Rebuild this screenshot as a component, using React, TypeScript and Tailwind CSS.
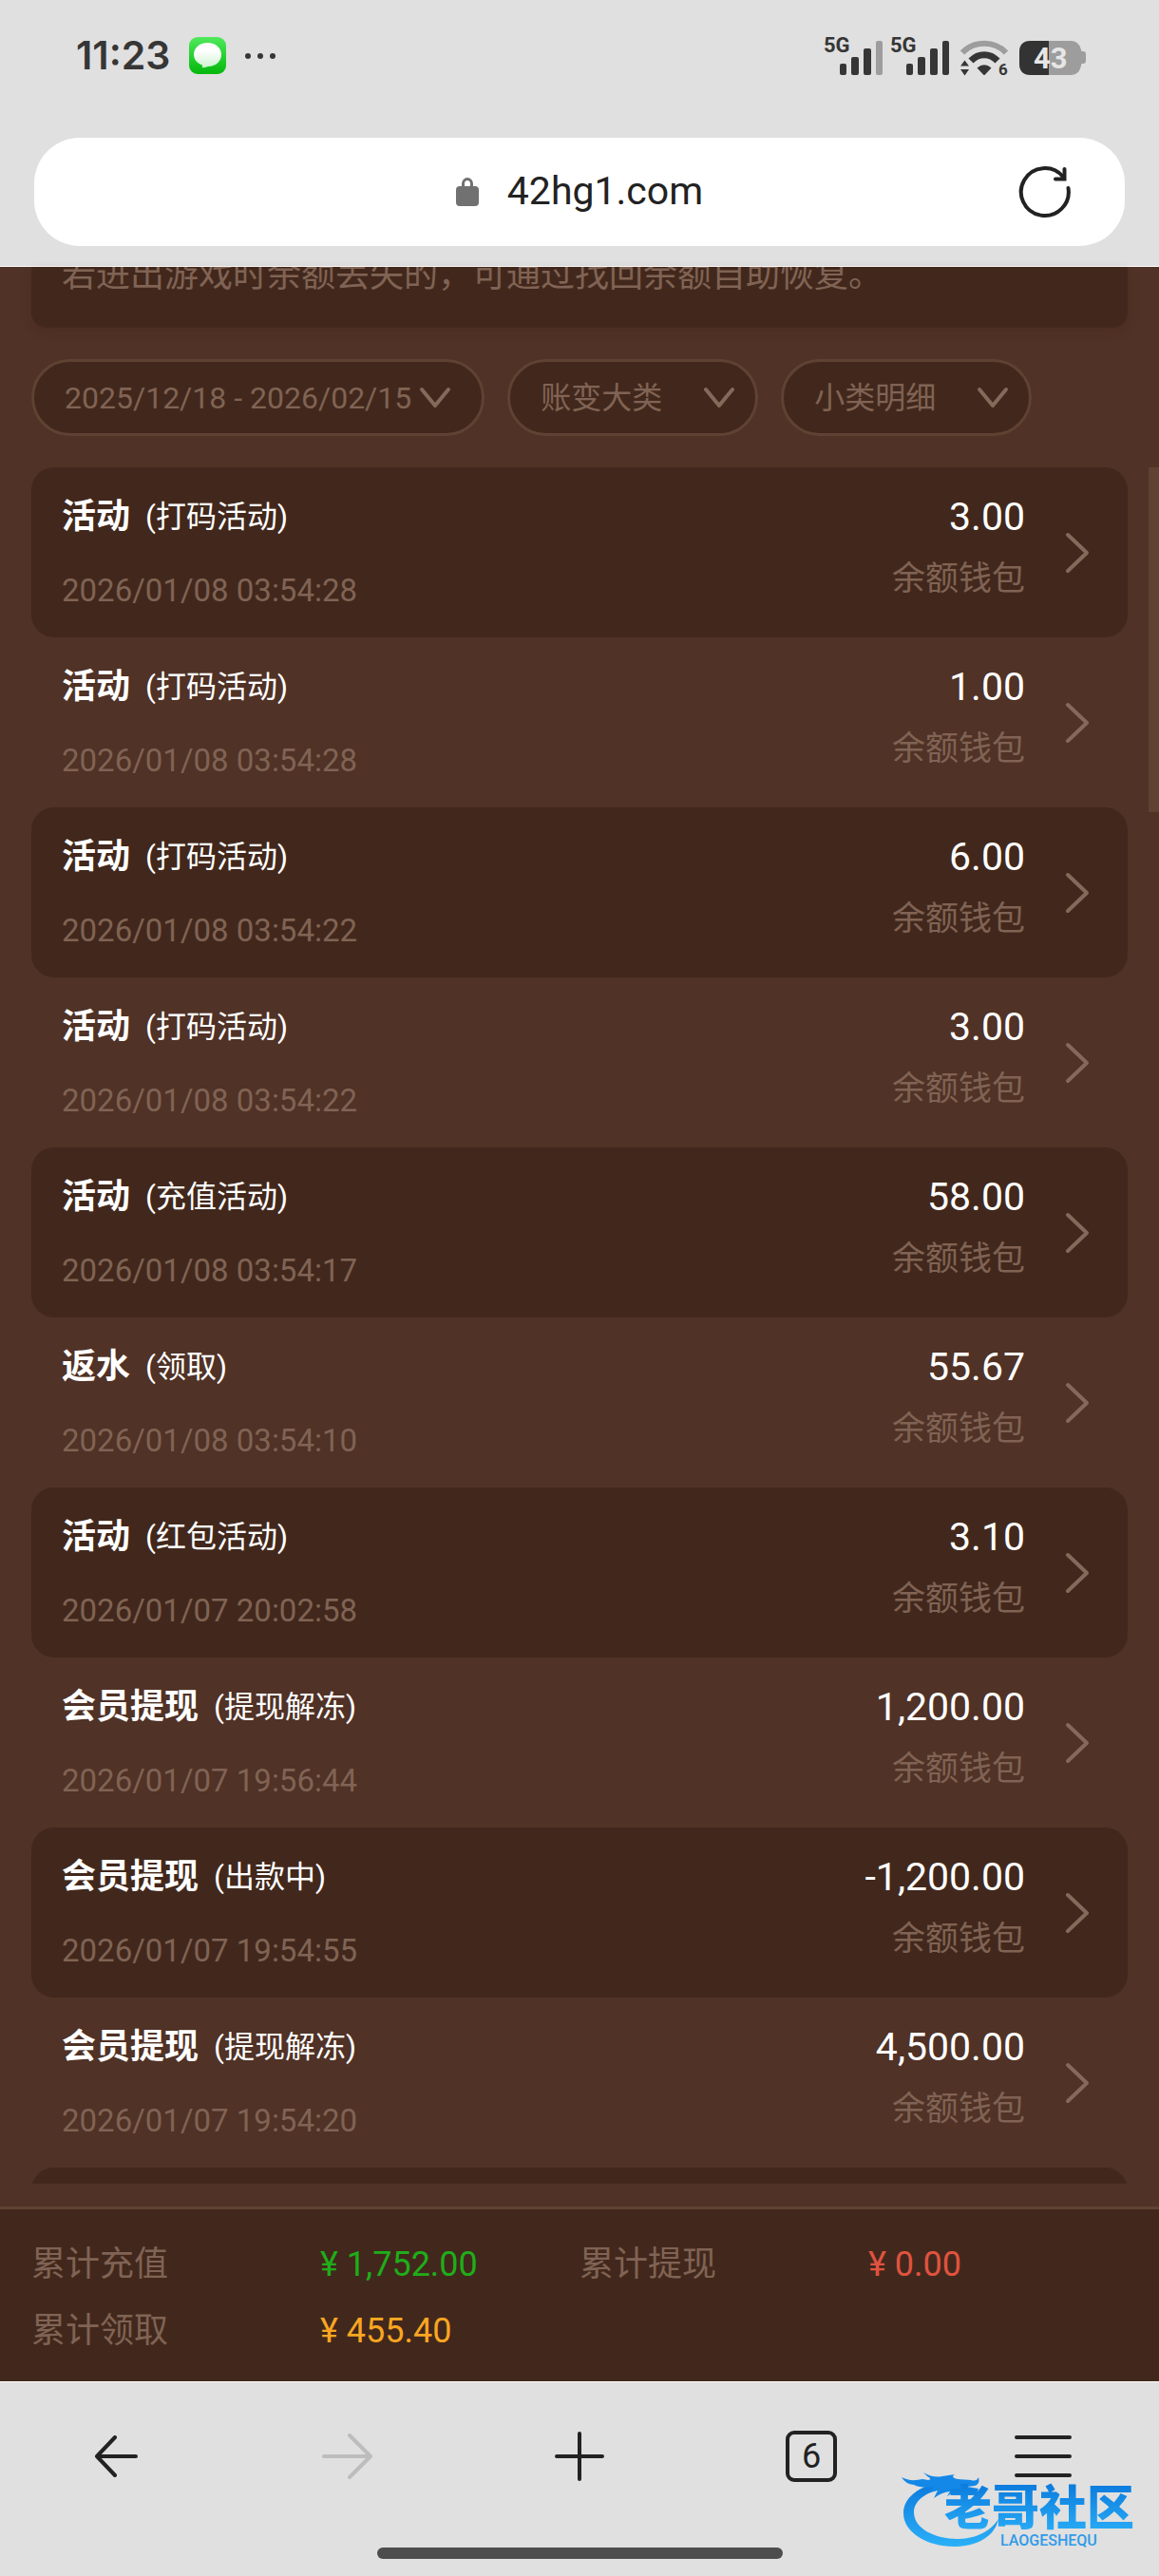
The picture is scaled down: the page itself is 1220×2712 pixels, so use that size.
import { clsx } from "clsx";

interface BillRecord {
    type: string;
    detail: string;
    time: string;
    amount: string;
}

const records: BillRecord[] = [
    { type: "活动", detail: "打码活动", time: "2026/01/08 03:54:28", amount: "3.00" },
    { type: "活动", detail: "打码活动", time: "2026/01/08 03:54:28", amount: "1.00" },
    { type: "活动", detail: "打码活动", time: "2026/01/08 03:54:22", amount: "6.00" },
    { type: "活动", detail: "打码活动", time: "2026/01/08 03:54:22", amount: "3.00" },
    { type: "活动", detail: "充值活动", time: "2026/01/08 03:54:17", amount: "58.00" },
    { type: "返水", detail: "领取", time: "2026/01/08 03:54:10", amount: "55.67" },
    { type: "活动", detail: "红包活动", time: "2026/01/07 20:02:58", amount: "3.10" },
    { type: "会员提现", detail: "提现解冻", time: "2026/01/07 19:56:44", amount: "1,200.00" },
    { type: "会员提现", detail: "出款中", time: "2026/01/07 19:54:55", amount: "-1,200.00" },
    { type: "会员提现", detail: "提现解冻", time: "2026/01/07 19:54:20", amount: "4,500.00" },
];

const totals = [
    { label: "累计充值", value: "1,752.00", color: "text-[#1fad1a]" },
    { label: "累计提现", value: "0.00", color: "text-[#e0533f]" },
    { label: "累计领取", value: "455.40", color: "text-[#f9a622]" },
];

function SignalIcon({ full = false }: { full?: boolean }) {
    return (
        <svg viewBox="-1 -4 66 52" className="h-[52px] w-[66px]" fill="#363636">
            <text x="0" y="18" fontSize="22" fontWeight="700">
                5G
            </text>
            <rect x="17" y="30" width="7" height="12" rx="2" />
            <rect x="29" y="23" width="8" height="19" rx="2" />
            <rect x="42" y="14" width="8" height="28" rx="2" />
            <rect
                x="55"
                y="6"
                width="7"
                height="36"
                rx="2"
                fill={full ? "#363636" : "#9d9d9d"}
            />
        </svg>
    );
}

function WifiIcon() {
    return (
        <svg viewBox="0 -4 54 52" className="h-[52px] w-[54px]" fill="#363636">
            <path
                d="M3 18.5C15 5.500 37 5.500 49 18.5"
                fill="none"
                stroke="#9d9d9d"
                strokeWidth="6"
            />
            <path
                d="M12 27C20 18.500 32 18.500 40 27"
                fill="none"
                stroke="#363636"
                strokeWidth="7"
            />
            <path d="M18.5 34.5Q26 28 33.5 34.5L27 41.5Q26 42.500 25 41.5Z" />
            <path d="M1 32.500L5.500 26.500L10 32.500ZM1 36L5.500 42.500L10 36Z" />
            <text x="41" y="42" fontSize="17" fontWeight="700">
                6
            </text>
        </svg>
    );
}

function BatteryIcon() {
    return (
        <svg viewBox="0 0 70 44" className="h-11 w-[70px]">
            <path
                d="M12 6H54Q62 6 64.500 14L65.500 17H67Q70 17 70 20V27Q70 30 67 30H65.500L64.500 34Q62 42 54 42H12Q0 42 0 30V18Q0 6 12 6Z"
                fill="#9d9d9d"
            />
            <path d="M12 6H31V42H12Q0 42 0 30V18Q0 6 12 6Z" fill="#333333" />
            <text x="15" y="35" fontSize="31" fontWeight="700" fill="#e6e6e6">
                43
            </text>
        </svg>
    );
}

function MessageIcon() {
    return (
        <svg viewBox="0 0 39 39" className="size-[39px]">
            <defs>
                <linearGradient id="msg-bg" x1="0" y1="0" x2="0" y2="1">
                    <stop offset="0" stopColor="#4fe95c" />
                    <stop offset="1" stopColor="#03b80b" />
                </linearGradient>
                <linearGradient id="msg-bubble" x1="0" y1="0" x2="0" y2="1">
                    <stop offset="0.3" stopColor="#ffffff" />
                    <stop offset="1" stopColor="#cdf3cf" />
                </linearGradient>
            </defs>
            <rect width="39" height="39" rx="9" fill="url(#msg-bg)" />
            <path
                d="M19.500 6C28 6 34 11.500 34 18.500C34 25.500 28 31 20 31Q17 32.500 13.500 32Q14.500 31 14 29.500C8.500 27.500 5 23.500 5 18.500C5 11.500 11 6 19.500 6Z"
                fill="url(#msg-bubble)"
            />
        </svg>
    );
}

function ChevronDown() {
    return (
        <svg
            viewBox="0 0 34 24"
            className="pointer-events-none h-6 w-[34px] shrink-0"
            fill="none"
            stroke="#85695b"
            strokeWidth="4"
            strokeLinecap="round"
            strokeLinejoin="round"
        >
            <path d="M3 3L17 20L31 3" />
        </svg>
    );
}

function FilterSelect({ label }: { label: string }) {
    return (
        <div className="relative">
            <select
                aria-label={label}
                className="h-[81px] w-[264px] appearance-none rounded-full border-3 border-[#5f4232] bg-[#42281c] pl-8 text-[32px] text-[#806354]"
            >
                <option>{label}</option>
            </select>
            <div className="pointer-events-none absolute inset-y-0 right-6 flex items-center">
                <ChevronDown />
            </div>
        </div>
    );
}

function RecordRow({ record, dark }: { record: BillRecord; dark: boolean }) {
    return (
        <li>
            <button
                type="button"
                className={clsx(
                    "flex h-[179px] w-full items-center rounded-3xl pr-10 pl-8 text-left",
                    dark && "bg-[#42281c]"
                )}
            >
                <div className="flex flex-1 flex-col gap-[34px] self-start pt-[30px]">
                    <div className="flex items-center gap-4 leading-[44px] text-white">
                        <span className="text-[36px] font-bold">
                            {record.type}
                        </span>
                        <span className="text-[32px]">({record.detail})</span>
                    </div>
                    <time className="text-[33px] leading-[44px] text-[#806354]">
                        {record.time}
                    </time>
                </div>
                <div className="mr-[42px] flex flex-col gap-[22px] self-start pt-[30px] text-right leading-[44px]">
                    <span className="text-[41px] text-white">
                        {record.amount}
                    </span>
                    <span className="text-[35px] text-[#806354]">余额钱包</span>
                </div>
                <svg
                    viewBox="0 0 26 44"
                    className="h-11 w-[26px]"
                    fill="none"
                    stroke="#85695b"
                    strokeWidth="4"
                    strokeLinecap="round"
                    strokeLinejoin="round"
                >
                    <path d="M3 3L23 22L3 41" />
                </svg>
            </button>
        </li>
    );
}

function CommunityLogo() {
    return (
        <svg
            viewBox="0 0 260 92"
            className="pointer-events-none absolute right-3 bottom-6 h-[92px] w-[260px]"
        >
            <defs>
                <linearGradient id="logo-blue" x1="0" y1="0" x2="0" y2="1">
                    <stop offset="0" stopColor="#0a78dc" />
                    <stop offset="1" stopColor="#2bb0f8" />
                </linearGradient>
            </defs>
            {/* Dragon body */}
            <path
                d="M46 16C18 21 3 34 3 50C3 70 28 85 56 85C80 85 99 75 103 56C94 70 78 77 60 77C36 77 14 66 14 49C14 36 28 26 50 24Z"
                fill="url(#logo-blue)"
            />
            {/* Head, horns and whiskers */}
            <path
                d="M1 12Q10 17 23 14L29 15Q34 14 28 11L24 7Q34 13 44 11L57 9Q52 12 60 14L74 15Q80 17 82 12Q84 19 78 21L70 22L82 24Q81 30 73 29L62 27Q54 28 49 32L52 27Q43 28 35 34L39 26L30 27L36 22Q22 24 14 20Q5 19 1 12Z"
                fill="#1388e8"
            />
            <text
                x="46"
                y="62"
                fontSize="50"
                fontWeight="900"
                fill="url(#logo-blue)"
            >
                老哥社区
            </text>
            <text x="105" y="84" fontSize="16" fontWeight="500" fill="#2f9bea">
                LAOGESHEQU
            </text>
        </svg>
    );
}

export default function App() {
    return (
        <div className="relative flex h-screen flex-col overflow-hidden bg-[#503226] font-[Roboto,'Noto_Sans_CJK_SC',sans-serif]">
            {/* Status bar and address bar */}
            <header className="border-b border-white bg-[#e0e0e0] pb-[21px]">
                <div className="flex h-[117px] items-center justify-between pr-[77px] pl-20">
                    <div className="flex items-center gap-5">
                        <span className="font-[Inter,sans-serif] text-[41px] leading-none font-semibold text-[#363636]">
                            11:23
                        </span>
                        <MessageIcon />
                        <div className="flex gap-[7px]">
                            <span className="size-1.5 rounded-full bg-[#363636]" />
                            <span className="size-1.5 rounded-full bg-[#363636]" />
                            <span className="size-1.5 rounded-full bg-[#363636]" />
                        </div>
                    </div>
                    <div className="flex items-center">
                        <SignalIcon />
                        <div className="ml-1">
                            <SignalIcon full />
                        </div>
                        <div className="ml-2">
                            <WifiIcon />
                        </div>
                        <div className="ml-[9px]">
                            <BatteryIcon />
                        </div>
                    </div>
                </div>
                <div className="mx-9 mt-7 grid h-[114px] grid-cols-[1fr_auto_1fr] items-center rounded-[48px] bg-white">
                    <span />
                    <div className="flex items-center gap-[30px]">
                        <svg viewBox="0 0 24 30" className="h-[30px] w-6">
                            <rect y="9" width="24" height="21" rx="4" fill="#717171" />
                            <path
                                d="M7.500 10V6.500A4.500 5 0 0 1 16.500 6.500V10"
                                fill="none"
                                stroke="#717171"
                                strokeWidth="3"
                            />
                        </svg>
                        <input
                            aria-label="网址"
                            defaultValue="42hg1.com"
                            className="field-sizing-content bg-transparent text-[41px] text-[#222222] outline-none"
                        />
                    </div>
                    <button
                        type="button"
                        aria-label="刷新"
                        className="mr-14 justify-self-end"
                    >
                        <svg
                            viewBox="0 0 56 56"
                            className="size-14"
                            fill="none"
                            stroke="#222222"
                            strokeWidth="4"
                            strokeLinecap="round"
                        >
                            <path d="M52.500 24A25 25 0 1 1 47 12" />
                            <path d="M48.500 4V14.500H39" />
                        </svg>
                    </button>
                </div>
            </header>

            {/* Notice, scrolled partly under the header */}
            <div className="mx-[33px] flex h-16 shrink-0 flex-col justify-end overflow-hidden rounded-b-2xl bg-[#42281c] px-8 pb-7 shadow-[0_4px_12px_rgba(60,20,20,0.15)]">
                <p className="text-[36px] leading-[54px] text-[#806354]">
                    若进出游戏时余额丢失的，可通过找回余额自助恢复。
                </p>
            </div>

            {/* Filters */}
            <div className="mx-[33px] my-[33px] flex gap-6">
                <button
                    type="button"
                    className="flex h-[81px] items-center gap-2 rounded-full border-3 border-[#5f4232] bg-[#42281c] px-8 text-[32px] whitespace-nowrap text-[#806354]"
                >
                    2025/12/18 - 2026/02/15
                    <ChevronDown />
                </button>
                <FilterSelect label="账变大类" />
                <FilterSelect label="小类明细" />
            </div>

            {/* Records */}
            <main className="relative mb-6 min-h-0 flex-1 overflow-hidden px-[33px]">
                <ul>
                    {records.map((record, index) => (
                        <RecordRow
                            key={index}
                            record={record}
                            dark={index % 2 === 0}
                        />
                    ))}
                    <li className="h-[179px] rounded-3xl bg-[#42281c]" />
                </ul>
                <div className="absolute top-0 right-0 h-[363px] w-[11px] bg-[#5f4232]" />
            </main>

            {/* Totals */}
            <dl className="grid grid-cols-2 gap-y-5 border-t-3 border-[#5f4232] bg-[#42281c] px-[33px] pt-[33px] pb-7 text-[36px] leading-[50px]">
                {totals.map((total) => (
                    <div key={total.label} className="flex">
                        <dt className="w-[304px] text-[#806354]">
                            {total.label}
                        </dt>
                        <dd className={total.color}>¥ {total.value}</dd>
                    </div>
                ))}
            </dl>

            {/* Browser toolbar */}
            <footer className="border-t border-white bg-[#e0e0e0] pb-[18px] text-[#222222]">
                <nav className="grid h-[156px] grid-cols-5 place-items-center">
                    <button type="button" aria-label="后退">
                        <svg
                            viewBox="0 0 46 44"
                            className="h-11 w-[46px]"
                            fill="none"
                            stroke="currentColor"
                            strokeWidth="4"
                            strokeLinecap="round"
                            strokeLinejoin="round"
                        >
                            <path d="M44 22H3M22 2L3 22L22 42" />
                        </svg>
                    </button>
                    <button type="button" aria-label="前进" disabled>
                        <svg
                            viewBox="0 0 54 48"
                            className="h-12 w-[54px]"
                            fill="none"
                            stroke="#bdbdbd"
                            strokeWidth="4"
                            strokeLinecap="round"
                            strokeLinejoin="round"
                        >
                            <path d="M2 24H51M29 2L51 24L29 46" />
                        </svg>
                    </button>
                    <button type="button" aria-label="新建标签页">
                        <svg
                            viewBox="0 0 52 52"
                            className="size-[52px]"
                            stroke="currentColor"
                            strokeWidth="4"
                            strokeLinecap="round"
                        >
                            <path d="M26 2V50M2 26H50" />
                        </svg>
                    </button>
                    <button
                        type="button"
                        aria-label="6 个标签页"
                        className="flex size-[54px] items-center justify-center rounded-[9px] border-4 border-[#222222] text-[36px] leading-none"
                    >
                        6
                    </button>
                    <button type="button" aria-label="菜单">
                        <svg
                            viewBox="0 0 60 44"
                            className="h-11 w-[60px]"
                            stroke="currentColor"
                            strokeWidth="4"
                            strokeLinecap="round"
                        >
                            <path d="M2 2H58M2 22H58M2 42H58" />
                        </svg>
                    </button>
                </nav>
                <div className="mx-auto mt-[18px] h-3 w-[35%] rounded-full bg-[#4d4d4d]" />
            </footer>

            <CommunityLogo />
        </div>
    );
}
